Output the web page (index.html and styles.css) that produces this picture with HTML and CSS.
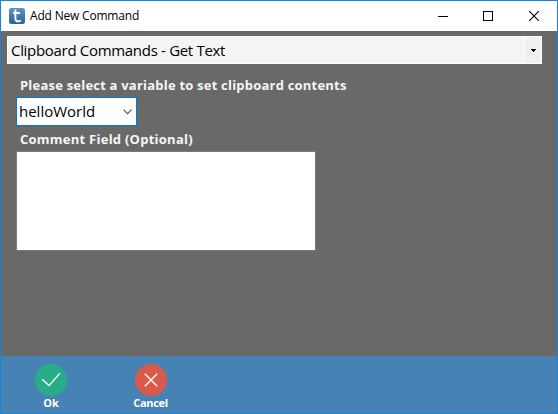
FILE: index.html
```html
<!DOCTYPE html>
<html lang="en">
<head>
<meta charset="utf-8">
<title>Add New Command</title>
<link rel="stylesheet" href="styles.css">
</head>
<body>
<div class="window">
  <header class="titlebar">
    <svg class="app-icon" width="16" height="16" viewBox="0 0 16 16">
      <defs><linearGradient id="g" x1="0" y1="0" x2="0" y2="1"><stop offset="0" stop-color="#5b93c2"/><stop offset="1" stop-color="#2f6496"/></linearGradient></defs>
      <rect width="16" height="16" rx="2.5" fill="url(#g)"/>
      <path d="M6.4 1.5V10.2Q6.4 13.4 9.2 13.4Q10.8 13.4 11.8 12.6M4 5H11" fill="none" stroke="#fff" stroke-width="1.9"/>
    </svg>
    <span class="title">Add New Command</span>
    <div class="controls">
      <span class="control"><svg width="12" height="10" shape-rendering="crispEdges"><rect x="2" y="5" width="10" height="1"/></svg></span>
      <span class="control"><svg width="10" height="10"><rect x=".5" y=".5" width="9" height="9" fill="none" stroke="#000"/></svg></span>
      <span class="control"><svg width="10" height="10"><path d="M0 0L10 10M10 0L0 10" stroke="#000" stroke-width="1.1"/></svg></span>
    </div>
  </header>
  <main class="content">
    <div class="command-select">
      <span class="command-text">Clipboard Commands - Get Text</span>
      <span class="command-arrow"><svg width="5" height="3" shape-rendering="crispEdges"><path d="M0 0H5V1H4V2H3V3H2V2H1V1H0Z"/></svg></span>
    </div>
    <div class="label label-variable">Please select a variable to set clipboard contents</div>
    <div class="variable-select">
      <span class="variable-text">helloWorld</span>
      <svg width="9" height="6"><path d="M.5 .7L4.5 4.7L8.5 .7" fill="none" stroke="#505050" stroke-width="1.1"/></svg>
    </div>
    <div class="label label-comment">Comment Field (Optional)</div>
    <div class="comment"></div>
  </main>
  <footer class="actions">
    <div class="action">
      <svg width="32" height="32"><circle cx="16" cy="16" r="16" fill="#27ae88"/><path d="M7.3 15.5L14 21.6L24.8 9.4" fill="none" stroke="#fff" stroke-width="1.4"/></svg>
      <span class="action-text">Ok</span>
    </div>
    <div class="action">
      <svg width="32" height="32"><circle cx="16" cy="16" r="16" fill="#d9594a"/><path d="M9.8 9.8L22.2 22.2M22.2 9.8L9.8 22.2" stroke="#fff" stroke-width="1.4"/></svg>
      <span class="action-text action-text-cancel">Cancel</span>
    </div>
  </footer>
</div>
</body>
</html>
```
FILE: styles.css
```css
* { box-sizing: border-box; }
body { margin: 0; font-family: "Open Sans", "Noto Sans", sans-serif; color: #000; }
svg { display: block; flex: none; }
.window { width: 558px; height: 414px; border: 1px solid #1883d7; background: #696969; display: flex; flex-direction: column; }
.titlebar { height: 30px; background: #fff; display: flex; align-items: center; padding-left: 8px; flex: none; }
.title { margin-left: 5px; font-size: 12px; line-height: 16px; letter-spacing: -.19px; white-space: nowrap; }
.controls { display: flex; margin-left: auto; }
.control { width: 46px; height: 28px; display: flex; align-items: center; justify-content: center; }
.content { flex: 1; padding: 5px 0 0 6px; }
.command-select { width: 535px; height: 28px; border: 1px solid #fff; background: #f4f4f4; display: flex; }
.command-text { flex: 1; padding-left: 3px; font-size: 15px; line-height: 27px; letter-spacing: -.31px; white-space: nowrap; }
.command-arrow { width: 17px; border-left: 1px solid #fff; background: #f0f0f0; display: flex; align-items: center; justify-content: center; }
.label { margin-left: 13px; font-size: 13px; font-weight: 700; line-height: 18px; letter-spacing: .21px; color: #f5f5f5; white-space: nowrap; }
.label-variable { margin-top: 12px; }
.variable-select { width: 121px; height: 29px; margin: 3px 0 0 9px; padding: 0 4px 0 2px; border: 1px solid #0078d7; background: #fff; display: flex; align-items: center; justify-content: space-between; }
.variable-text { font-size: 15px; line-height: 27px; }
.label-comment { margin-top: 4px; letter-spacing: .25px; }
.comment { width: 300px; height: 100px; margin: 3px 0 0 9px; border: 1px solid #7a7a7a; background: #fff; }
.actions { height: 57px; background: #4682b4; display: flex; padding: 8px 0 0; flex: none; }
.action { width: 100px; display: flex; flex-direction: column; align-items: center; }
.action-text { font-size: 11px; font-weight: 700; line-height: 14px; color: #fff; }
.action-text-cancel { letter-spacing: -.3px; margin-right: 1px; }
```
